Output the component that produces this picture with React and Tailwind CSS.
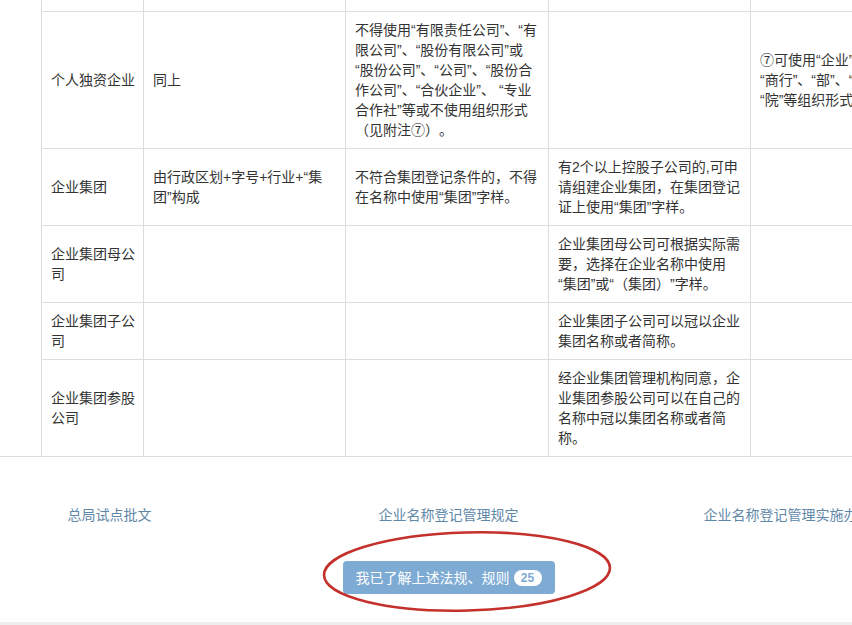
import React from "react";

const td = "border border-[#dddddd] px-[9px] align-middle text-left whitespace-nowrap overflow-hidden";

function Lines({ lines }) {
  return (
    <>
      {lines.map((l, i) => (
        <React.Fragment key={i}>
          {i > 0 && <br />}
          {l}
        </React.Fragment>
      ))}
    </>
  );
}

const rows = [
  {
    h: "h-[137px]",
    c: [
      ["个人独资企业"],
      ["同上"],
      [
        "不得使用“有限责任公司”、“有",
        "限公司”、“股份有限公司”或",
        "“股份公司”、“公司”、“股份合",
        "作公司”、“合伙企业”、 “专业",
        "合作社”等或不使用组织形式",
        "（见附注⑦）。",
      ],
      [],
      ["⑦可使用“企业”、", "“商行”、“部”、“中心”、", "“院”等组织形式。"],
    ],
  },
  {
    h: "h-[77px]",
    c: [
      ["企业集团"],
      ["由行政区划+字号+行业+“集", "团”构成"],
      ["不符合集团登记条件的，不得", "在名称中使用“集团”字样。"],
      ["有2个以上控股子公司的,可申", "请组建企业集团，在集团登记", "证上使用“集团”字样。"],
      [],
    ],
  },
  {
    h: "h-[77px]",
    c: [
      ["企业集团母公", "司"],
      [],
      [],
      ["企业集团母公司可根据实际需", "要，选择在企业名称中使用", "“集团”或“（集团）”字样。"],
      [],
    ],
  },
  {
    h: "h-[57px]",
    c: [
      ["企业集团子公", "司"],
      [],
      [],
      ["企业集团子公司可以冠以企业", "集团名称或者简称。"],
      [],
    ],
  },
  {
    h: "h-[97px]",
    c: [
      ["企业集团参股", "公司"],
      [],
      [],
      ["经企业集团管理机构同意，企", "业集团参股公司可以在自己的", "名称中冠以集团名称或者简", "称。"],
      [],
    ],
  },
];

export default function App() {
  return (
    <div className="relative w-[852px] h-[625px] overflow-hidden bg-white text-[14px] leading-[20px] text-[#333333] [text-spacing-trim:space-all] font-['Liberation_Sans','Noto_Sans_CJK_SC',sans-serif]">
      <div className="border-b border-[#dddddd] overflow-hidden">
        <table className="ml-[41px] table-fixed border-collapse w-[1011px]">
          <colgroup>
            <col className="w-[102px]" />
            <col className="w-[202px]" />
            <col className="w-[203px]" />
            <col className="w-[202px]" />
            <col className="w-[302px]" />
          </colgroup>
          <tbody>
            <tr>
              {[0, 1, 2, 3, 4].map((i) => (
                <td key={i} className={td + " border-t-0 h-[11px] p-0"}></td>
              ))}
            </tr>
            {rows.map((r, ri) => (
              <tr key={ri}>
                {r.c.map((lines, ci) => (
                  <td
                    key={ci}
                    className={
                      td + " " + r.h + (ri === rows.length - 1 ? " border-b-0" : "")
                    }
                  >
                    <Lines lines={lines} />
                  </td>
                ))}
              </tr>
            ))}
          </tbody>
        </table>
      </div>

      <div className="ml-[-60px] w-[1017px]">
        <div className="grid grid-cols-3 text-center mt-[48px] text-[#5f88a8]">
          <a className="cursor-pointer">总局试点批文</a>
          <a className="cursor-pointer">企业名称登记管理规定</a>
          <a className="cursor-pointer">企业名称登记管理实施办法</a>
        </div>
        <div className="flex justify-center mt-[36px]">
          <button className="flex items-center gap-[4px] h-[33px] px-[13px] rounded-[4px] bg-[#7eabd4] text-white">
            <span>我已了解上述法规、规则</span>
            <span className="flex items-center justify-center h-[16px] min-w-[28px] px-[6px] rounded-full bg-white text-[#7eabd4] text-[12px] leading-[16px] font-bold">
              25
            </span>
          </button>
        </div>
      </div>

      <div className="absolute left-0 right-0 bottom-0 h-[3px] bg-[#eeeeee]"></div>

      <svg
        className="absolute left-[318px] top-[527px] pointer-events-none"
        width="298"
        height="90"
        viewBox="0 0 298 90"
      >
        <ellipse
          cx="149"
          cy="44.5"
          rx="143"
          ry="39"
          fill="none"
          stroke="#c4302b"
          strokeWidth="2.6"
          transform="rotate(-1.5 149 44.5)"
        />
      </svg>
    </div>
  );
}
